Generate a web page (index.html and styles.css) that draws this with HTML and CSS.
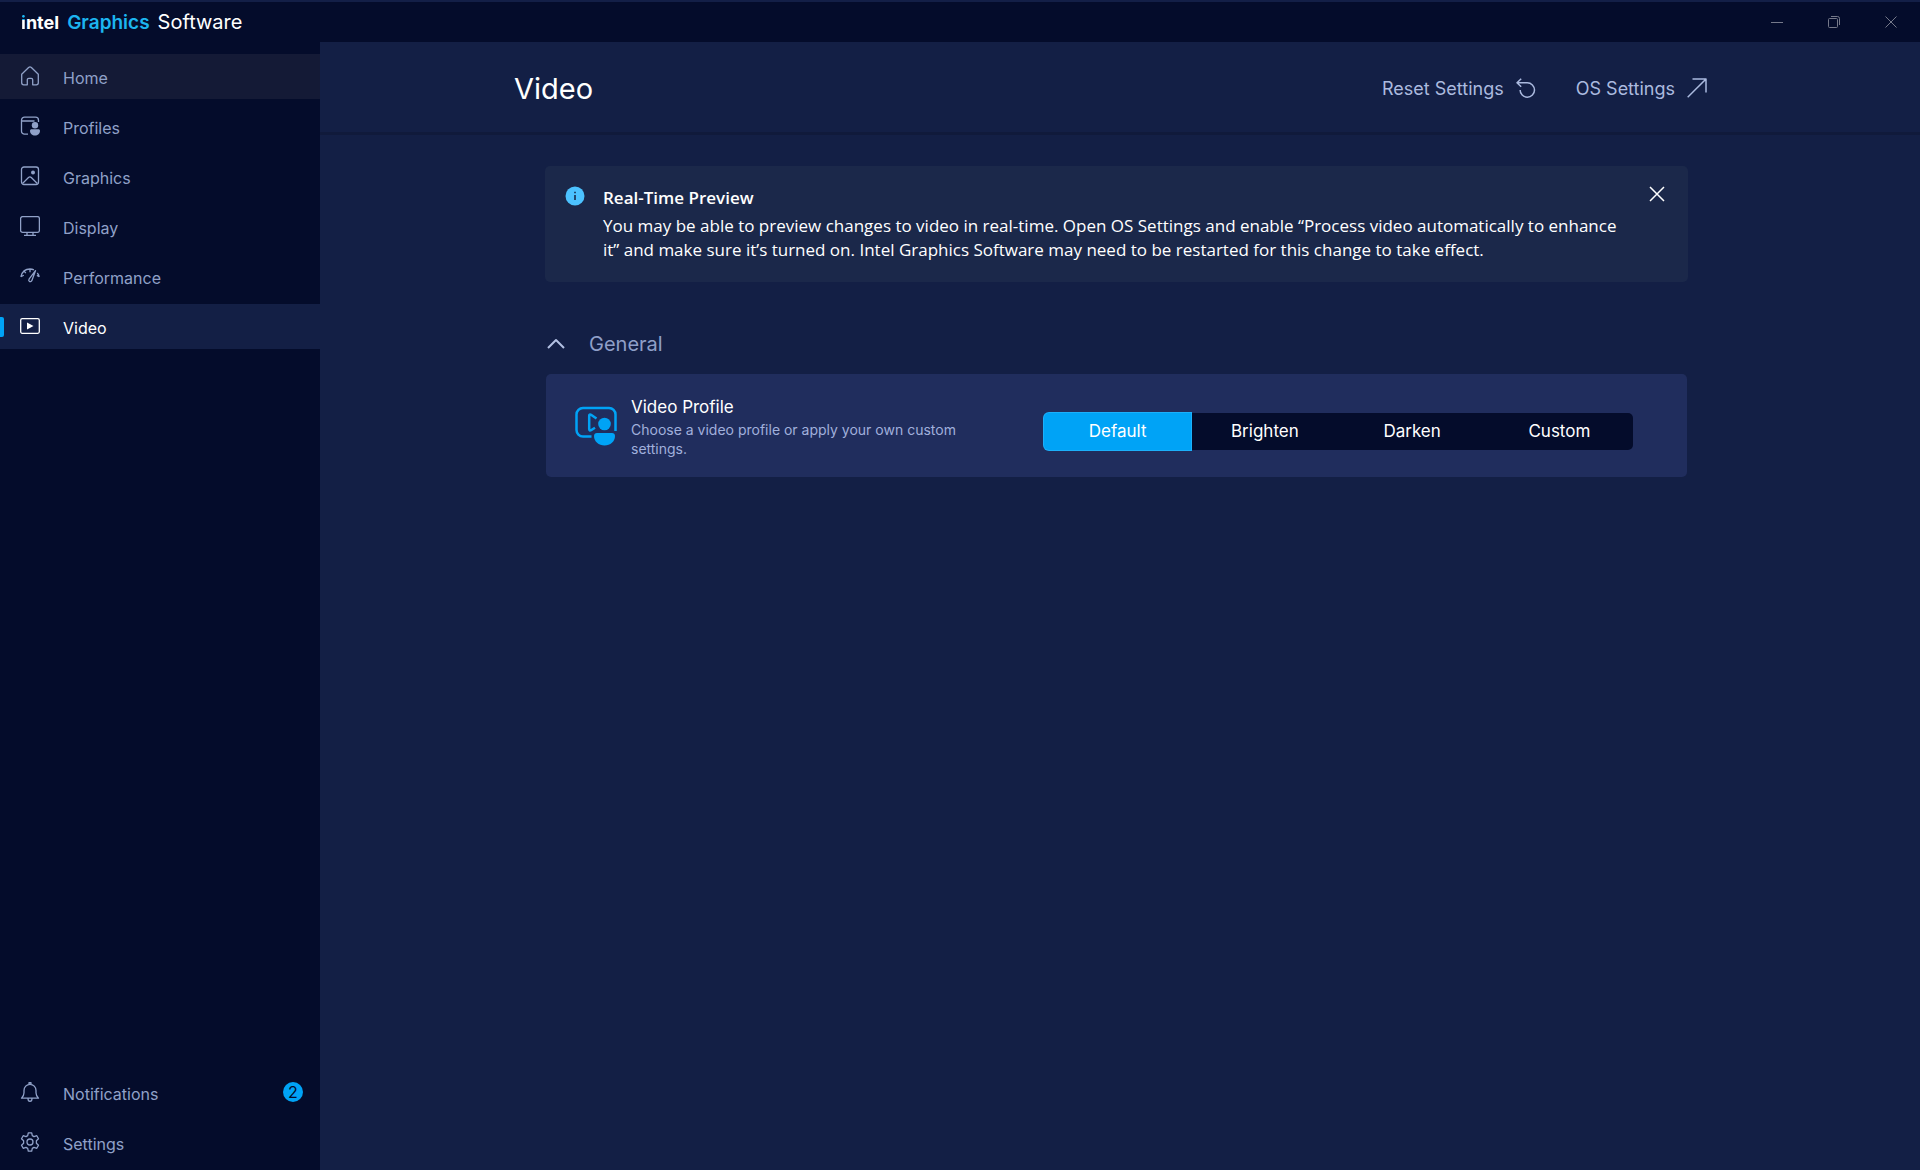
FILE: index.html
```html
<!DOCTYPE html>
<html lang="en">
<head>
    <meta charset="UTF-8">
    <meta name="viewport" content="width=device-width, initial-scale=1.0">
    <title>Intel Graphics Software</title>
    <link rel="stylesheet" href="styles.css">
</head>
<body>
    <!-- Title bar -->
    <header class="titlebar">
        <div class="brand">
            <span class="brand-intel"><span class="brand-dot">i</span>ntel</span>
            <span class="brand-graphics">Graphics</span>
            <span class="brand-software">Software</span>
        </div>
        <div class="window-buttons">
            <button class="window-button" aria-label="Minimize">
                <svg width="12" height="12" viewBox="0 0 12 12"><path d="M0 6.5h12"/></svg>
            </button>
            <button class="window-button" aria-label="Restore">
                <svg width="12" height="12" viewBox="0 0 12 12"><rect x="0.5" y="2.5" width="9" height="9" rx="1"/><path d="M3 0.5h6.5a2 2 0 0 1 2 2V9"/></svg>
            </button>
            <button class="window-button" aria-label="Close">
                <svg width="12" height="12" viewBox="0 0 12 12"><path d="M0.5 0.5l11 11M11.5 0.5l-11 11"/></svg>
            </button>
        </div>
    </header>

    <div class="layout">
        <!-- Sidebar -->
        <nav class="sidebar">
            <div class="nav-group">
                <a class="nav-item hovered" href="#home">
                    <svg class="nav-icon" viewBox="0 0 20 20"><path d="M1.7 8.2L8.600 1.500a2 2 0 0 1 2.800 0l6.900 6.700v8.600a2 2 0 0 1-2 2h-3.600v-5a1.500 1.500 0 0 0-1.500-1.500H8.800a1.500 1.500 0 0 0-1.500 1.500v5H3.700a2 2 0 0 1-2-2z"/></svg>
                    <span>Home</span>
                </a>
                <a class="nav-item" href="#profiles">
                    <svg class="nav-icon" viewBox="0 0 20 20"><path d="M8 18.2H4.5a3 3 0 0 1-3-3v-11a3 3 0 0 1 3-3h11a3 3 0 0 1 3 3V6M1.5 5h13"/><circle class="fill" cx="15" cy="9.3" r="3.2"/><path class="fill" d="M10 14.8c0-1 .7-1.6 1.6-1.6h6.8c.9 0 1.6.6 1.6 1.6 0 3-2.2 4.8-5 4.8s-5-1.8-5-4.8z"/></svg>
                    <span>Profiles</span>
                </a>
                <a class="nav-item" href="#graphics">
                    <svg class="nav-icon" viewBox="0 0 20 20"><rect x="1.5" y="1" width="17" height="17.5" rx="2.5"/><circle class="fill" cx="13" cy="6.5" r="2"/><path d="M2.5 17.5L8.500 11.500a2 2 0 0 1 2.800 0l6 6"/></svg>
                    <span>Graphics</span>
                </a>
                <a class="nav-item" href="#display">
                    <svg class="nav-icon" viewBox="0 0 20 20"><rect x="0.6" y="0.6" width="18.8" height="15.8" rx="2"/><path d="M7 16.4v3M13 16.4v3M4 19.400h12"/></svg>
                    <span>Display</span>
                </a>
                <a class="nav-item" href="#performance">
                    <svg class="nav-icon" viewBox="0 0 20 20"><path d="M0.8 10.8C2 6 5.5 3 10 3c1.5 0 2.8.3 3.9.9M17.2 7c1 1 1.7 2.3 2.1 3.8M0.8 10.8l3-1.600M19.300 10.800l-2.400-1.400M10 3v3.200M4.300 5.300l1.500 1.900M15.500 4.700l-6.300 8.200c-1.400 2.200 1.200 4 2.600 1.800z"/></svg>
                    <span>Performance</span>
                </a>
                <a class="nav-item active" href="#video" aria-current="page">
                    <svg class="nav-icon" viewBox="0 0 20 20"><rect x="0.7" y="2.7" width="18.6" height="14.6" rx="1.5"/><path class="fill" d="M7 6.500l6.500 3.500L7 13.500z"/></svg>
                    <span>Video</span>
                </a>
            </div>
            <div class="nav-group">
                <a class="nav-item" href="#notifications">
                    <svg class="nav-icon" viewBox="0 0 20 20"><path d="M1.5 16.2c1.8-1.7 2.5-3.2 2.5-5.5V8.5c0-3.4 2.6-6.2 6-6.2s6 2.800 6 6.200v2.200c0 2.300.700 3.800 2.500 5.500zM9 2.300V0.700h2v1.600M8 16.400c0 3.800 4 3.800 4 0"/></svg>
                    <span>Notifications</span>
                    <span class="nav-badge">2</span>
                </a>
                <a class="nav-item" href="#settings">
                    <svg class="nav-icon" viewBox="0 0 20 20"><circle cx="10" cy="10" r="3"/><path d="M8.300 0.800h3.400l.600 2.800 1.700 1 2.800-.900 1.700 3-2.100 2v2.600l2.100 2-1.700 3-2.800-.900-1.700 1-.600 2.800H8.300l-.600-2.800-1.700-1-2.800.900-1.700-3 2.100-2V8.700l-2.100-2 1.700-3 2.800.900 1.700-1z"/></svg>
                    <span>Settings</span>
                </a>
            </div>
        </nav>

        <!-- Page -->
        <main class="page">
            <div class="page-header">
                <div class="page-header-inner">
                    <h1>Video</h1>
                    <div class="page-actions">
                        <button class="action-button">
                            Reset Settings
                            <svg width="20" height="20" viewBox="0 0 20 20"><path d="M5.2 0.7L1 4.8l4.2 4M1 4.8h10.3a7.2 7.2 0 1 1-7.2 7.2"/></svg>
                        </button>
                        <button class="action-button">
                            OS Settings
                            <svg width="20" height="20" viewBox="0 0 20 20"><path d="M0.7 19.3L19 1M5.5 1H19v13.5"/></svg>
                        </button>
                    </div>
                </div>
            </div>

            <div class="page-content">
                <section class="info-bar">
                    <svg class="info-icon" width="20" height="20" viewBox="0 0 20 20" stroke="none"><circle class="info-disc" cx="10" cy="10" r="9.5"/><path class="info-mark" d="M10 5.800v1.500M10 9v5"/></svg>
                    <div class="info-text">
                        <h2>Real-Time Preview</h2>
                        <p>You may be able to preview changes to video in real-time. Open OS Settings and enable “Process video automatically to enhance it” and make sure it’s turned on. Intel Graphics Software may need to be restarted for this change to take effect.</p>
                    </div>
                    <button class="info-close" aria-label="Dismiss">
                        <svg width="16" height="16" viewBox="0 0 16 16"><path d="M1 1l14 14M15 1L1 15"/></svg>
                    </button>
                </section>

                <section class="general">
                    <h2>
                        <button class="section-toggle" aria-expanded="true">
                            <svg width="20" height="20" viewBox="0 0 20 20"><path d="M2 14l8-8 8 8"/></svg>
                            General
                        </button>
                    </h2>
                    <div class="card">
                        <svg class="card-icon" width="42" height="40" viewBox="0 0 42 40"><path d="M16.5 30.5H8a6.5 6.5 0 0 1-6.5-6.5V8.5A6.5 6.5 0 0 1 8 2h26a6.5 6.5 0 0 1 6.5 6.5V25M21.500 12.500L16 8.800c-1-.600-1.800-.200-1.800.900v13.600c0 1.100.800 1.500 1.800.900l4-2.400"/><circle class="fill" cx="29.5" cy="18" r="6.3"/><path class="fill" d="M19 30c0-1.800 1.200-3 3-3h15c1.800 0 3 1.200 3 3 0 5.600-4.700 9.500-10.500 9.500S19 35.600 19 30z"/></svg>
                        <div class="card-text">
                            <h3 id="profile-label">Video Profile</h3>
                            <p>Choose a video profile or apply your own custom settings.</p>
                        </div>
                        <div class="segments" role="group" aria-labelledby="profile-label">
                            <button class="segment selected" aria-pressed="true">Default</button>
                            <button class="segment" aria-pressed="false">Brighten</button>
                            <button class="segment" aria-pressed="false">Darken</button>
                            <button class="segment" aria-pressed="false">Custom</button>
                        </div>
                    </div>
                </section>
            </div>
        </main>
    </div>
</body>
</html>
```
FILE: styles.css
```css
* {
    box-sizing: border-box;
}

body {
    margin: 0;
    min-height: 100vh;
    display: flex;
    flex-direction: column;
    background-color: #131f45;
    color: #fff;
    font-family: Inter, "Liberation Sans", sans-serif;
    font-size: 17px;
}

h1, h2, h3, p {
    margin: 0;
    font-weight: 400;
}

button {
    padding: 0;
    border: none;
    background: none;
    color: inherit;
    font: inherit;
    cursor: pointer;
}

svg {
    flex-shrink: 0;
    fill: none;
    stroke: currentColor;
    stroke-linejoin: round;
}

.fill {
    fill: currentColor;
    stroke: none;
}

/* Title bar */
.titlebar {
    display: flex;
    justify-content: space-between;
    height: 42px;
    padding-right: 1px;
    border-top: 2px solid #131f47;
    background-color: #040c2b;
}

.brand {
    display: flex;
    align-items: center;
    gap: 8px;
    padding-left: 21px;
    font-size: 20px;
}

.brand-intel {
    font-size: 18px;
    font-weight: 700;
}

.brand-dot {
    background: linear-gradient(#1cb5f0 38%, #fff 38%);
    background-clip: text;
    -webkit-background-clip: text;
    color: transparent;
}

.brand-graphics {
    color: #1cb5f0;
    font-size: 19px;
    font-weight: 600;
}

.window-buttons {
    display: flex;
}

.window-button {
    width: 57px;
    color: #75798a;
}

/* Sidebar */
.layout {
    flex: 1;
    display: flex;
}

.sidebar {
    display: flex;
    flex-direction: column;
    justify-content: space-between;
    width: 320px;
    padding: 12px 0 5px;
    background-color: #040c2b;
    font-size: 16px;
}

.nav-group {
    display: flex;
    flex-direction: column;
    gap: 5px;
}

.nav-item {
    position: relative;
    display: flex;
    align-items: center;
    height: 45px;
    padding: 2px 17px 0 20px;
    color: #90a1c8;
    text-decoration: none;
}

.nav-item.hovered {
    background-color: #141a36;
}

.nav-item.active {
    background-color: #131f45;
    color: #fff;
}

.nav-item.active::before {
    content: "";
    position: absolute;
    left: 0;
    top: 13px;
    width: 4px;
    height: 20px;
    border-radius: 0 2px 2px 0;
    background-color: #00a3f6;
}

.nav-icon {
    width: 20px;
    height: 20px;
    margin: 0 23px 4px 0;
    stroke-width: 1.3;
}

.nav-badge {
    width: 20px;
    height: 20px;
    margin: 0 0 4px auto;
    border-radius: 50%;
    background-color: #00a3f6;
    color: #040c2b;
    line-height: 20px;
    text-align: center;
}

/* Page */
.page {
    flex: 1;
}

.page-header {
    padding: 0 20px;
    border-bottom: 3px solid #101a3b;
}

.page-header-inner {
    display: flex;
    justify-content: space-between;
    align-items: center;
    max-width: 1212px;
    height: 90px;
    margin: 0 auto;
    padding-top: 3px;
}

h1 {
    font-size: 29px;
}

.page-actions {
    display: flex;
    gap: 40px;
    padding-right: 19px;
}

.action-button {
    display: flex;
    align-items: center;
    gap: 12px;
    color: #abbadf;
    font-size: 18px;
}

.action-button svg {
    margin-bottom: 2px;
    stroke-width: 1.5;
}

.page-content {
    max-width: 1190px;
    margin: 0 auto;
    padding: 31px 27px 31px 20px;
}

/* Info bar */
.info-bar {
    display: flex;
    align-items: flex-start;
    margin-bottom: 44px;
    padding: 20px 23px 20px 20px;
    border-radius: 5px;
    background-color: #1b284a;
    font-family: "Open Sans", sans-serif;
}

.info-icon {
    margin-right: 18px;
}

.info-disc {
    fill: #4cc2ff;
    stroke: none;
}

.info-mark {
    stroke: #14213f;
    stroke-width: 1.5;
}

.info-text {
    flex: 1;
    padding-right: 24px;
    line-height: 24px;
}

.info-text h2 {
    margin-bottom: 4px;
    font-size: 17px;
    font-weight: 600;
}

.info-close svg {
    display: block;
    stroke-width: 1.5;
}

/* General */
.general {
    padding: 0 1px;
}

.section-toggle {
    display: flex;
    align-items: center;
    gap: 23px;
    height: 36px;
    margin-bottom: 12px;
    color: #8f9fc8;
    font-size: 20px;
}

.section-toggle svg {
    color: #b3c1e3;
    stroke-width: 2;
}

.card {
    display: flex;
    align-items: center;
    padding: 20px 54px 19px 29px;
    border-radius: 5px;
    background-color: #202d5d;
}

.card-icon {
    margin-right: 14px;
    color: #00a3f6;
    stroke-width: 2.5;
}

.card-text {
    flex: 1;
    padding-right: 60px;
}

.card-text h3 {
    font-size: 17px;
    line-height: 26px;
}

.card-text p {
    color: #a0b0dc;
    font-size: 14px;
    line-height: 19px;
}

.segments {
    display: flex;
    width: 589px;
    margin-top: 10px;
    border-radius: 5px;
    background-color: #040c2b;
}

.segment {
    flex: 1;
    height: 37px;
}

.segment.selected {
    border-radius: 5px 0 0 5px;
    background-color: #00a3f6;
    box-shadow: 0 0 0 1px #1cb0fb;
}
```
